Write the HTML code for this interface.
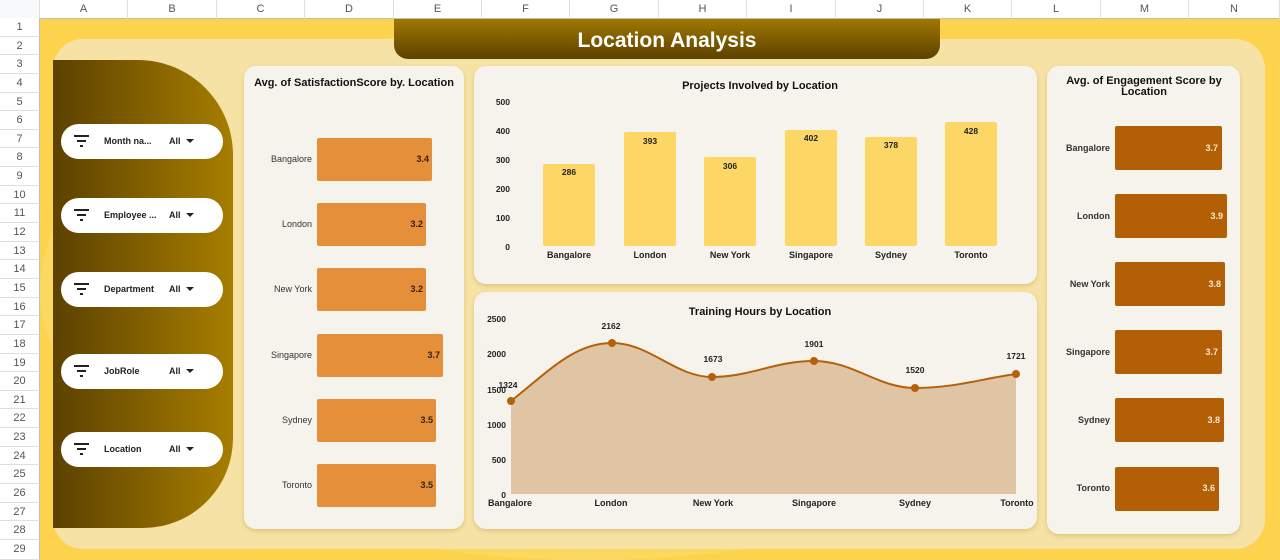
<!DOCTYPE html>
<html style="width:1280px;height:560px;overflow:hidden"><head><meta charset="utf-8"><style>
*{margin:0;padding:0;box-sizing:border-box}
body{width:1280px;height:560px;overflow:hidden;background:#fff;font-family:"Liberation Sans",Arial,sans-serif;position:relative}
.abs{position:absolute}
.colh{position:absolute;top:0;height:19px;border-right:1px solid #e0e0e0;border-bottom:1px solid #c0c0c0;font-size:11px;color:#555;text-align:center;line-height:18px;background:#fff}
.rowh{position:absolute;left:0;width:40px;border-bottom:1px solid #e0e0e0;border-right:1px solid #c0c0c0;font-size:11px;color:#555;text-align:center;background:#fff}
.card{position:absolute;background:#f5f3ec;border-radius:12px;box-shadow:0 2px 4px rgba(150,110,20,.25)}
.pill{position:absolute;left:61px;width:162px;height:35px;background:#fff;border-radius:18px;font-size:9px;font-weight:bold;color:#222}
.pill .ic{position:absolute;left:13px;top:11px;width:15px}
.pill .ic i{display:block;height:2px;background:#222;margin:0 auto 3px}
.pill .lb{position:absolute;left:43px;top:12px}
.pill .al{position:absolute;left:108px;top:12px}
.pill .al:after{content:"";display:inline-block;margin-left:5px;border-left:4px solid transparent;border-right:4px solid transparent;border-top:4px solid #222;vertical-align:1px}
.t{font-weight:bold;color:#111;text-align:center;position:absolute}
</style></head><body>
<div class="colh" style="left:0;width:40px;background:#f8f9fa"></div>
<div class="colh" style="left:40px;width:88px">A</div>
<div class="colh" style="left:128px;width:89px">B</div>
<div class="colh" style="left:217px;width:88px">C</div>
<div class="colh" style="left:305px;width:89px">D</div>
<div class="colh" style="left:394px;width:88px">E</div>
<div class="colh" style="left:482px;width:88px">F</div>
<div class="colh" style="left:570px;width:89px">G</div>
<div class="colh" style="left:659px;width:88px">H</div>
<div class="colh" style="left:747px;width:89px">I</div>
<div class="colh" style="left:836px;width:88px">J</div>
<div class="colh" style="left:924px;width:88px">K</div>
<div class="colh" style="left:1012px;width:89px">L</div>
<div class="colh" style="left:1101px;width:88px">M</div>
<div class="colh" style="left:1189px;width:91px">N</div>
<div id="rows"></div>
<script>
var r='';for(var i=1;i<=29;i++){var y=18+(i-1)*18.64;var h=(i==29)?(560-y):18.64;r+='<div class="rowh" style="top:'+y+'px;height:'+h+'px;line-height:18px">'+i+'</div>';}
document.getElementById('rows').innerHTML=r;
</script>
<div class="abs" style="left:40px;top:19px;width:1240px;height:541px;background:#fdd34e;overflow:hidden">
 <div class="abs" style="left:0;top:0;width:1100px;height:541px;border-radius:50%;background:#fbd860"></div>
</div>
<div class="abs" style="left:53px;top:39px;width:1212px;height:510px;background:#f6e2a4;border-radius:30px"></div>
<div class="abs" style="left:394px;top:19px;width:546px;height:40px;background:linear-gradient(#a07800,#5c4100);border-radius:0 0 14px 14px;color:#fff;font-size:21px;font-weight:bold;text-align:center;line-height:44px">Location Analysis</div>
<div class="abs" style="left:53px;top:60px;width:180px;height:468px;background:linear-gradient(90deg,#5c4100,#a77e00);border-radius:0 95px 90px 0"></div>
<div class="pill" style="top:124px"><div class="ic"><i style="width:15px"></i><i style="width:9px"></i><i style="width:3px"></i></div><span class="lb">Month na...</span><span class="al">All</span></div>
<div class="pill" style="top:198px"><div class="ic"><i style="width:15px"></i><i style="width:9px"></i><i style="width:3px"></i></div><span class="lb">Employee ...</span><span class="al">All</span></div>
<div class="pill" style="top:272px"><div class="ic"><i style="width:15px"></i><i style="width:9px"></i><i style="width:3px"></i></div><span class="lb">Department</span><span class="al">All</span></div>
<div class="pill" style="top:354px"><div class="ic"><i style="width:15px"></i><i style="width:9px"></i><i style="width:3px"></i></div><span class="lb">JobRole</span><span class="al">All</span></div>
<div class="pill" style="top:432px"><div class="ic"><i style="width:15px"></i><i style="width:9px"></i><i style="width:3px"></i></div><span class="lb">Location</span><span class="al">All</span></div>
<div class="card" style="left:244px;top:66px;width:220px;height:463px"></div>
<div class="t" style="left:244px;top:77px;width:220px;font-size:11px">Avg. of SatisfactionScore by. Location</div>
<svg class="abs" style="left:0;top:0" width="1280" height="560" font-family="Liberation Sans, Arial, sans-serif">
 <g font-size="9" fill="#333" text-anchor="end">
  <text x="312" y="162">Bangalore</text><text x="312" y="227">London</text><text x="312" y="292">New York</text><text x="312" y="358">Singapore</text><text x="312" y="423">Sydney</text><text x="312" y="488">Toronto</text>
 </g>
 <g fill="#e58f3b">
  <rect x="317" y="138" width="115" height="43" rx="2"/><rect x="317" y="203" width="109" height="43" rx="2"/><rect x="317" y="268" width="109" height="43" rx="2"/><rect x="317" y="334" width="126" height="43" rx="2"/><rect x="317" y="399" width="119" height="43" rx="2"/><rect x="317" y="464" width="119" height="43" rx="2"/>
 </g>
 <g font-size="9" font-weight="bold" fill="#3a2200" text-anchor="end">
  <text x="429" y="162">3.4</text><text x="423" y="227">3.2</text><text x="423" y="292">3.2</text><text x="440" y="358">3.7</text><text x="433" y="423">3.5</text><text x="433" y="488">3.5</text>
 </g>
</svg>
<div class="card" style="left:474px;top:66px;width:563px;height:218px"></div>
<div class="card" style="left:474px;top:292px;width:563px;height:237px"></div>
<div class="card" style="left:1047px;top:66px;width:193px;height:468px"></div>
<svg class="abs" style="left:0;top:0" width="1280" height="560" font-family="Liberation Sans, Arial, sans-serif">
 <text x="760" y="89" font-size="11" font-weight="bold" text-anchor="middle" fill="#111">Projects Involved by Location</text>
 <g font-size="8.5" font-weight="bold" fill="#222" text-anchor="end">
  <text x="510" y="105">500</text><text x="510" y="134">400</text><text x="510" y="163">300</text><text x="510" y="192">200</text><text x="510" y="221">100</text><text x="510" y="250">0</text>
 </g>
 <g fill="#fdd766">
  <rect x="543" y="164" width="52" height="82" rx="2"/><rect x="624" y="132" width="52" height="114" rx="2"/><rect x="704" y="157" width="52" height="89" rx="2"/><rect x="785" y="130" width="52" height="116" rx="2"/><rect x="865" y="137" width="52" height="109" rx="2"/><rect x="945" y="122" width="52" height="124" rx="2"/>
 </g>
 <g font-size="8.5" font-weight="bold" fill="#222" text-anchor="middle">
  <text x="569" y="175">286</text><text x="650" y="144">393</text><text x="730" y="169">306</text><text x="811" y="141">402</text><text x="891" y="148">378</text><text x="971" y="134">428</text>
 </g>
 <g font-size="9" font-weight="bold" fill="#222" text-anchor="middle">
  <text x="569" y="258">Bangalore</text><text x="650" y="258">London</text><text x="730" y="258">New York</text><text x="811" y="258">Singapore</text><text x="891" y="258">Sydney</text><text x="971" y="258">Toronto</text>
 </g>
 <text x="760" y="315" font-size="11" font-weight="bold" text-anchor="middle" fill="#111">Training Hours by Location</text>
 <g font-size="8.5" font-weight="bold" fill="#222" text-anchor="end">
  <text x="506" y="322">2500</text><text x="506" y="357">2000</text><text x="506" y="393">1500</text><text x="506" y="428">1000</text><text x="506" y="463">500</text><text x="506" y="498">0</text>
 </g>
 <path d="M511,401 C550,370 575,343 612,343 C650,343 675,377 712,377 C750,377 775,361 814,361 C853,361 878,388 915,388 C955,388 985,378 1016,374 L1016,494 L511,494 Z" fill="#e0c5a5"/>
 <path d="M511,401 C550,370 575,343 612,343 C650,343 675,377 712,377 C750,377 775,361 814,361 C853,361 878,388 915,388 C955,388 985,378 1016,374" fill="none" stroke="#b5600a" stroke-width="2"/>
 <g fill="#b5600a"><circle cx="511" cy="401" r="4"/><circle cx="612" cy="343" r="4"/><circle cx="712" cy="377" r="4"/><circle cx="814" cy="361" r="4"/><circle cx="915" cy="388" r="4"/><circle cx="1016" cy="374" r="4"/></g>
 <g font-size="8.5" font-weight="bold" fill="#222" text-anchor="middle">
  <text x="508" y="388">1324</text><text x="611" y="329">2162</text><text x="713" y="362">1673</text><text x="814" y="347">1901</text><text x="915" y="373">1520</text><text x="1016" y="359">1721</text>
 </g>
 <g font-size="9" font-weight="bold" fill="#222" text-anchor="middle">
  <text x="510" y="506">Bangalore</text><text x="611" y="506">London</text><text x="713" y="506">New York</text><text x="814" y="506">Singapore</text><text x="915" y="506">Sydney</text><text x="1017" y="506">Toronto</text>
 </g>
 <text x="1144" y="84" font-size="11" font-weight="bold" text-anchor="middle" fill="#111">Avg. of Engagement Score by</text>
 <text x="1144" y="95" font-size="11" font-weight="bold" text-anchor="middle" fill="#111">Location</text>
 <g font-size="9" font-weight="bold" fill="#333" text-anchor="end">
  <text x="1110" y="151">Bangalore</text><text x="1110" y="219">London</text><text x="1110" y="287">New York</text><text x="1110" y="355">Singapore</text><text x="1110" y="423">Sydney</text><text x="1110" y="491">Toronto</text>
 </g>
 <g fill="#b35f05">
  <rect x="1115" y="126" width="107" height="44" rx="2"/><rect x="1115" y="194" width="112" height="44" rx="2"/><rect x="1115" y="262" width="110" height="44" rx="2"/><rect x="1115" y="330" width="107" height="44" rx="2"/><rect x="1115" y="398" width="109" height="44" rx="2"/><rect x="1115" y="467" width="104" height="44" rx="2"/>
 </g>
 <g font-size="9" font-weight="bold" fill="#fbe6c8" text-anchor="end">
  <text x="1218" y="151">3.7</text><text x="1223" y="219">3.9</text><text x="1221" y="287">3.8</text><text x="1218" y="355">3.7</text><text x="1220" y="423">3.8</text><text x="1215" y="491">3.6</text>
 </g>
</svg>
</body></html>
